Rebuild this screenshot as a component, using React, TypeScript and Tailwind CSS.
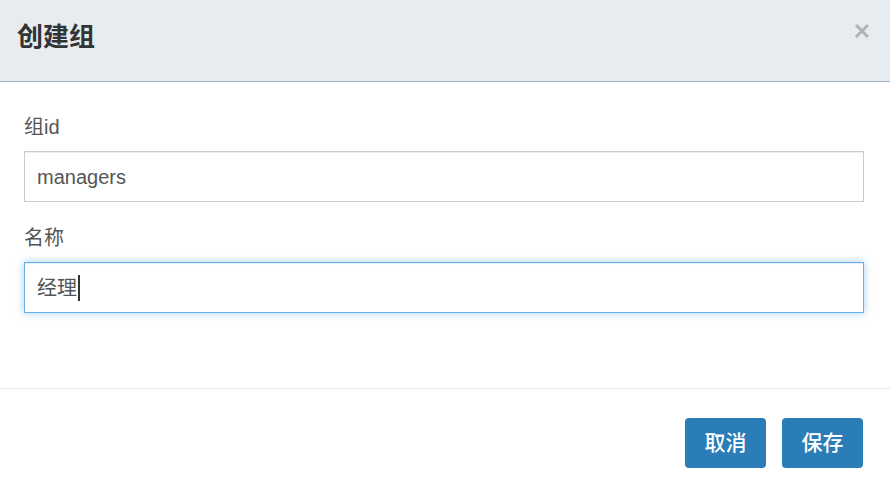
import React from "react";

export default function App() {
  const font = { fontFamily: '"Liberation Sans", "Noto Sans CJK SC", sans-serif' };
  return (
    <div className="w-[890px] h-[496px] bg-white overflow-hidden" style={font}>
      <div className="h-[82px] bg-[#e7ecf0] border-b border-[#a3b2c4] flex items-start justify-between pl-[17px] pr-[20px]">
        <div className="mt-[20px] text-[26px] leading-[34px] font-bold text-[#333]">创建组</div>
        <button className="mt-[23px] w-[16px] h-[16px] flex items-center justify-center">
          <svg width="16" height="16" viewBox="0 0 16 16">
            <path d="M2 2 L14 14 M14 2 L2 14" stroke="#b3b3b3" strokeWidth="3" strokeLinecap="butt" />
          </svg>
        </button>
      </div>
      <div className="pl-[24px] pr-[26px] pt-[31px] pb-[75px]">
        <div className="h-[28px] leading-[28px] text-[20px] text-[#555] mb-[10px]">组id</div>
        <div className="h-[51px] border border-[#ccc] shadow-[inset_0_1px_1px_rgba(0,0,0,0.075)] flex items-center px-[12px] text-[20px] text-[#555]">
          managers
        </div>
        <div className="h-[28px] leading-[28px] text-[20px] text-[#555] mt-[22px] mb-[10px]">名称</div>
        <div className="h-[51px] border border-[#66afe9] shadow-[inset_0_1px_1px_rgba(0,0,0,0.075),0_0_8px_rgba(102,175,233,0.6)] flex items-center px-[12px] text-[20px] text-[#555]">
          <span>经理</span>
          <span className="w-[2px] h-[26px] bg-[#333] ml-[1px]"></span>
        </div>
      </div>
      <div className="border-t border-[#e5e5e5] flex justify-end gap-[16px] pt-[29px] pr-[27px]">
        <button className="w-[81px] h-[50px] rounded-[4px] bg-[#2a7db6] text-white text-[21px] font-medium">取消</button>
        <button className="w-[81px] h-[50px] rounded-[4px] bg-[#2a7db6] text-white text-[21px] font-medium">保存</button>
      </div>
    </div>
  );
}
